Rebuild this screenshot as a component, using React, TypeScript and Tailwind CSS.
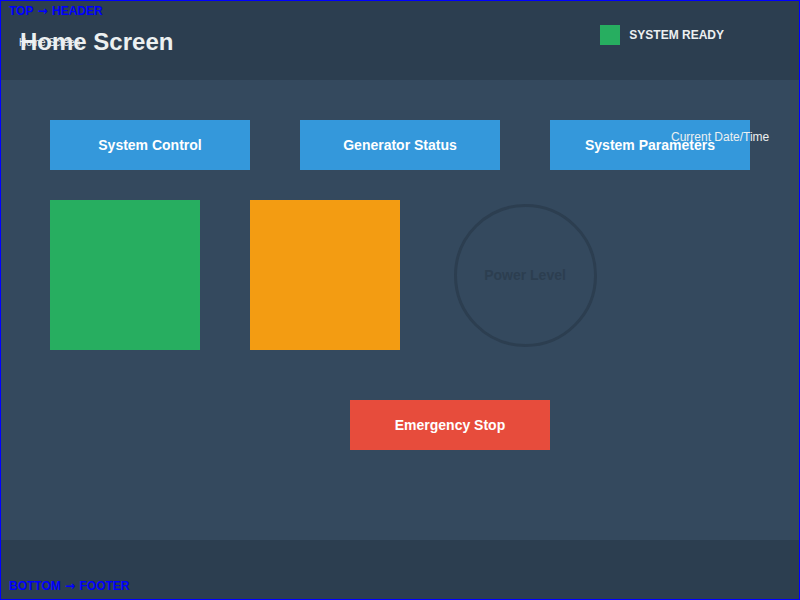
import React from "react";

export default function App() {
  const font = { fontFamily: '"Liberation Sans", Arial, sans-serif' };
  const arrow = { fontFamily: '"DejaVu Sans", sans-serif' };
  return (
    <div
      className="relative box-border flex h-[600px] w-[800px] flex-col border border-[#0000ff] bg-[#2c3e50]"
      style={font}
    >
      <header className="flex h-[79px] shrink-0 items-center justify-between bg-[#2c3e50] pl-[19px] pr-[75px]">
        <h1 className="mt-[2px] text-[24px] font-bold leading-none text-[#ecf0f1]">Home Screen</h1>
        <div className="mb-[11px] flex items-center gap-[9px]">
          <div className="h-[20px] w-[20px] bg-[#27ae60]" />
          <span className="text-[12px] font-bold leading-none text-[#ecf0f1]">SYSTEM READY</span>
        </div>
      </header>

      <main className="flex h-[460px] shrink-0 flex-col gap-[30px] bg-[#34495e] pl-[49px] pt-[40px]">
        <div className="flex gap-[50px]">
          {["System Control", "Generator Status", "System Parameters"].map((t) => (
            <div
              key={t}
              className="flex h-[50px] w-[200px] items-center justify-center bg-[#3498db] text-[14px] font-bold text-white"
            >
              {t}
            </div>
          ))}
        </div>
        <div className="flex gap-[50px]">
          <div className="h-[150px] w-[150px] bg-[#27ae60]" />
          <div className="h-[150px] w-[150px] bg-[#f39c12]" />
          <div className="flex h-[150px] w-[150px] items-center justify-center">
            <div className="box-border flex h-[143px] w-[143px] items-center justify-center rounded-full border-[3px] border-[#2c3e50] text-[14px] font-bold text-[#2c3e50]">
              Power Level
            </div>
          </div>
        </div>
        <div className="ml-[300px] mt-[20px] flex h-[50px] w-[200px] items-center justify-center bg-[#e74c3c] text-[14px] font-bold text-white">
          Emergency Stop
        </div>
      </main>

      <footer className="flex-1 bg-[#2c3e50]" />

      <span className="absolute left-[8px] top-[3px] text-[12px] font-bold leading-[14px] text-[#0000ff]">
        TOP <span className="mx-[1px] inline-block" style={arrow}>→</span> HEADER
      </span>
      <span className="absolute left-[8px] top-[578px] text-[12px] font-bold leading-[14px] text-[#0000ff]">
        BOTTOM <span className="mx-[1px] inline-block" style={arrow}>→</span> FOOTER
      </span>
      <span className="absolute left-[18px] top-[36px] text-[10px] leading-[12px] text-[#ecf0f1]">
        Home Screen
      </span>
      <span className="absolute left-[670px] top-[129px] text-[12px] leading-[14px] text-[#ecf0f1]">
        Current Date/Time
      </span>
    </div>
  );
}
